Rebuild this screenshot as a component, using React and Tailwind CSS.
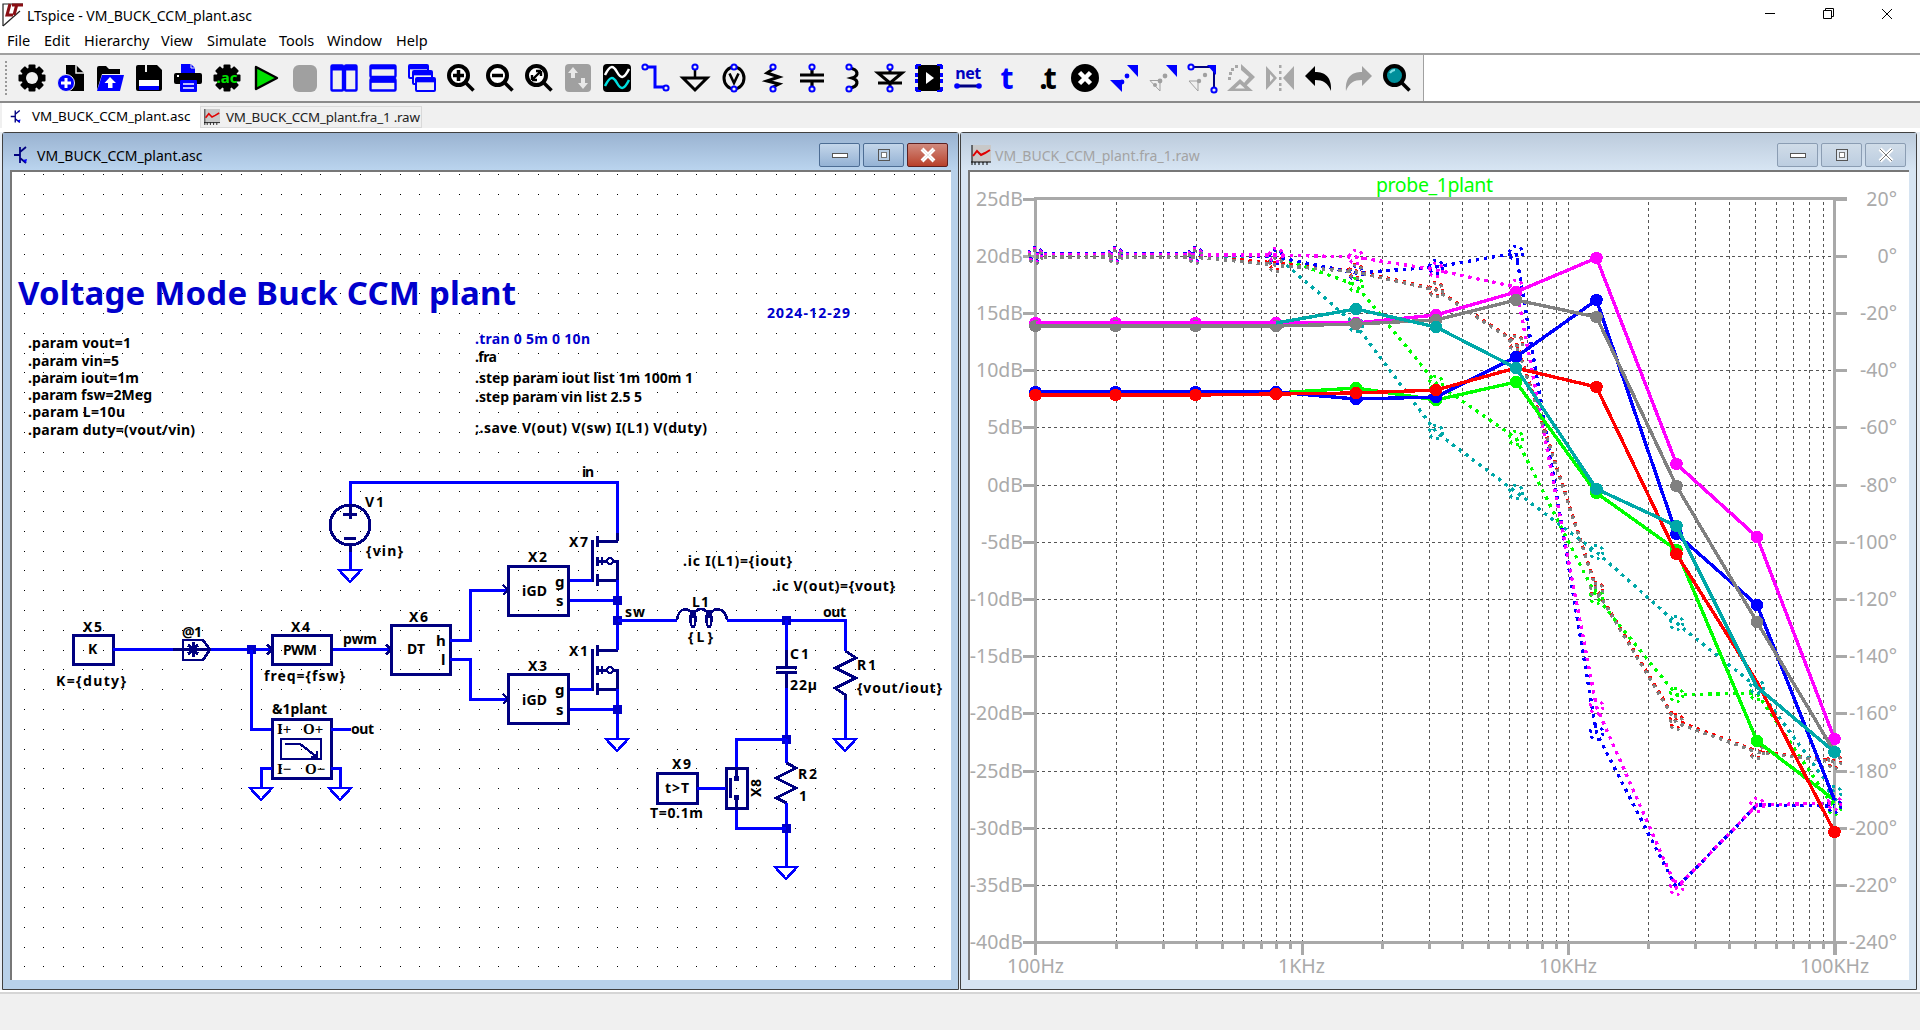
import React from "react";

const NAVY = "#000080";
const BLUE = "#0000ff";
const JUNC = "#0000c8";

/* ---------- toolbar icons (28x28) ---------- */
const Gear = ({ hole = "#f0f0f0", r = 6 }) => (
  <g>
    {[0, 45, 90, 135].map((a) => (
      <rect key={a} x="10.5" y="0.5" width="7" height="27" rx="1" transform={`rotate(${a} 14 14)`} fill="#000" />
    ))}
    <circle cx="14" cy="14" r="10.5" fill="#000" />
    {r > 0 && <circle cx="14" cy="14" r={r} fill={hole} />}
  </g>
);
const Pin = ({ x, y }) => <circle cx={x} cy={y} r="2.6" fill="#f0f0f0" stroke={BLUE} strokeWidth="2" />;
const Mag = ({ children, fill = "#fff" }) => (
  <g>
    <line x1="19" y1="19" x2="26.5" y2="26.5" stroke="#000" strokeWidth="3.5" />
    <circle cx="11.5" cy="11.5" r="9.5" fill={fill} stroke="#000" strokeWidth="4" />
    {children}
  </g>
);
const Win = ({ x, y, w, h, s = 2.4 }) => (
  <g>
    <rect x={x} y={y} width={w} height={h} fill="#f0f0f0" stroke={BLUE} strokeWidth={s} rx="1" />
    <rect x={x} y={y} width={w} height={Math.min(5, h / 3)} fill={BLUE} />
  </g>
);
const tx = "font-['Noto_Sans',sans-serif] font-bold";
const icons = [
  <Gear />,
  <g>
    <path d="M9 1H19L27 9V27H9Z" fill="#000" />
    <path d="M19 1V9H27" fill="none" stroke="#f0f0f0" strokeWidth="1.5" />
    <circle cx="9" cy="19" r="8.5" fill={BLUE} stroke="#f0f0f0" strokeWidth="1" />
    <path d="M9 14V24M4 19H14" stroke="#fff" strokeWidth="3" />
  </g>,
  <g>
    <path d="M1 26V4Q1 2 3 2H10L13 5H24V10H6L1 26Z" fill="#000" />
    <path d="M6 11H28L24 27H1Z" fill={BLUE} />
    <path d="M14 13L20 19H16.5V24H12V19H8.5Z" fill="#fff" />
  </g>,
  <g>
    <path d="M1 3Q1 1 3 1H22L27 6V25Q27 27 25 27H3Q1 27 1 25Z" fill="#000" />
    <rect x="10" y="1" width="2" height="7" fill="#f0f0f0" />
    <rect x="4" y="16" width="20" height="6" fill="#fff" />
    <rect x="4" y="22" width="20" height="4" fill={BLUE} />
  </g>,
  <g>
    <path d="M7 0H17L21 4V10H7Z" fill={BLUE} />
    <path d="M17 0V4H21" fill="none" stroke="#f0f0f0" />
    <rect x="0" y="9" width="28" height="11" rx="2" fill="#000" />
    <rect x="3" y="11" width="2" height="2" fill="#fff" />
    <rect x="6" y="16" width="17" height="12" rx="1" fill={BLUE} />
    <path d="M9 20H20M9 24H20" stroke="#fff" strokeWidth="1.5" />
  </g>,
  <g>
    <Gear r={0} />
    <text x="14" y="19" textAnchor="middle" fontSize="15" fill="#00e000" className={tx}>.ac</text>
  </g>,
  <path d="M4 3L25 14L4 25Z" fill="#00e000" stroke="#000" strokeWidth="2.4" strokeLinejoin="round" />,
  <rect x="2" y="1" width="24" height="27" rx="6" fill="#a0a0a0" />,
  <g><Win x={1.5} y={1.5} w={11.5} h={25} /><Win x={15} y={1.5} w={11.5} h={25} /></g>,
  <g><Win x={1.5} y={1.5} w={25} h={11.5} /><Win x={1.5} y={15} w={25} h={11.5} /></g>,
  <g><Win x={1} y={1} w={19} h={13} s={2} /><Win x={5} y={7} w={19} h={13} s={2} /><Win x={8} y={14} w={19} h={13} s={2} /></g>,
  <Mag><path d="M11.5 6V17M6 11.5H17" stroke="#000" strokeWidth="3.5" /></Mag>,
  <Mag><path d="M6 11.5H17" stroke="#000" strokeWidth="3.5" /></Mag>,
  <Mag><path d="M7 16L16 7M16 7H11M16 7V12M7 16H12M7 16V11" stroke="#000" strokeWidth="2.4" fill="none" /></Mag>,
  <g>
    <rect x="1" y="0" width="26" height="28" rx="4" fill="#a0a0a0" />
    <path d="M9 3L14 9H11V14H7V9H4Z" fill="#e8e8e8" />
    <path d="M19 25L24 19H21V14H17V19H14Z" fill="#e8e8e8" />
  </g>,
  <g>
    <rect x="0" y="0" width="28" height="28" rx="4" fill="#000" />
    <path d="M2 11C7 1 10 1 14 8S21 15 26 5" fill="none" stroke="#fff" strokeWidth="2.5" />
    <path d="M2 22C7 12 10 12 14 19S21 26 26 16" fill="none" stroke="#00e0e0" strokeWidth="2.5" />
  </g>,
  <g>
    <path d="M5 3H13V23H22" fill="none" stroke={BLUE} strokeWidth="3" />
    <Pin x={3} y={3} /><Pin x={24} y={24} />
  </g>,
  <g>
    <line x1="14" y1="4" x2="14" y2="14" stroke="#000" strokeWidth="2.5" />
    <path d="M2 14H26L14 26Z" fill="none" stroke="#000" strokeWidth="3" />
    <Pin x={14} y={3} />
  </g>,
  <g>
    <ellipse cx="14" cy="14" rx="10" ry="11" fill="none" stroke="#000" strokeWidth="3" />
    <path d="M9.5 9.5L14 19L18.5 9.5" fill="none" stroke="#000" strokeWidth="2.6" />
    <Pin x={14} y={3} /><Pin x={14} y={25} />
  </g>,
  <g>
    <path d="M14 5L8 9L20 13L8 17L20 20L14 23" fill="none" stroke="#000" strokeWidth="3" />
    <Pin x={14} y={3} /><Pin x={14} y={25} />
  </g>,
  <g>
    <path d="M14 5V11M14 17V23M2 11H26M2 17H26" stroke="#000" strokeWidth="3.2" />
    <Pin x={14} y={3} /><Pin x={14} y={25} />
  </g>,
  <g>
    <path d="M12 4C22 5 22 12 15 14C22 16 22 23 12 24" fill="none" stroke="#000" strokeWidth="3.2" />
    <Pin x={12} y={3} /><Pin x={12} y={25} />
  </g>,
  <g>
    <path d="M2 9H26L14 19Z" fill="none" stroke="#000" strokeWidth="3" />
    <path d="M2 19H26M14 5V9M14 19V23" stroke="#000" strokeWidth="3" />
    <Pin x={14} y={3} /><Pin x={14} y={25} />
  </g>,
  <g>
    <rect x="3" y="1" width="22" height="26" rx="2" fill="#000" />
    <path d="M11 8L19 14L11 20Z" fill="#fff" />
    {[3, 11, 17, 25].map((y) => (
      <g key={y}><rect x="0" y={y - 2} width="3" height="4" fill={BLUE} /><rect x="25" y={y - 2} width="3" height="4" fill={BLUE} /></g>
    ))}
    <path d="M1 1H6M22 1H27M1 27H6M22 27H27" stroke={BLUE} strokeWidth="2" />
  </g>,
  <g>
    <text x="14" y="15" textAnchor="middle" fontSize="16" fill="#0000c0" className={tx} style={{ letterSpacing: "-0.5px" }}>net</text>
    <path d="M3 22H25" stroke={NAVY} strokeWidth="3" />
    <circle cx="3" cy="22" r="2.8" fill={BLUE} /><circle cx="25" cy="22" r="2.8" fill={BLUE} />
  </g>,
  <text x="14" y="25" textAnchor="middle" fontSize="30" fill={BLUE} className={tx}>t</text>,
  <text x="14" y="25" textAnchor="middle" fontSize="30" fill="#000" className={tx} style={{ letterSpacing: "-4px" }}>.t</text>,
  <g>
    <circle cx="14" cy="14" r="14" fill="#000" />
    <path d="M8.5 8.5L19.5 19.5M19.5 8.5L8.5 19.5" stroke="#fff" strokeWidth="4.5" />
  </g>,
  <g>
    <path d="M28 1V13L17 1Z" fill={BLUE} /><path d="M0 16H12V28Z" fill={BLUE} />
    <circle cx="12" cy="18" r="2.4" fill={BLUE} /><circle cx="17" cy="12" r="2.4" fill={BLUE} />
  </g>,
  <g>
    <path d="M28 1V13L17 1Z" fill={BLUE} /><path d="M1 16.5H11V27Z" fill="none" stroke="#a0a0a0" />
    <circle cx="11" cy="17" r="2.4" fill="#a0a0a0" /><circle cx="16" cy="12" r="2.4" fill="#a0a0a0" /><circle cx="6" cy="21" r="2" fill="#a0a0a0" />
  </g>,
  <g>
    <path d="M5 3H26V25" fill="none" stroke={NAVY} strokeWidth="2" />
    <path d="M28 1V11L19 1Z" fill={BLUE} /><path d="M1 17H10V27Z" fill="none" stroke="#a0a0a0" />
    <circle cx="11" cy="17" r="2.2" fill="#a0a0a0" /><circle cx="17" cy="11" r="2.2" fill="#a0a0a0" />
    <Pin x={3} y={3} /><Pin x={26} y={26} />
  </g>,
  <g fill="#a8a8a8">
    <path d="M14 0L28 13L17 24V19L22 13L14 6Z" />
    <path d="M13 15L26 27H0ZM13 20L8 24.5H18Z" fillRule="evenodd" />
    {[[2, 8], [4, 4], [8, 1], [1, 13]].map(([x, y]) => <rect key={y} x={x} y={y} width="3" height="3" />)}
  </g>,
  <g fill="#a8a8a8">
    <path d="M0 2L11 14L0 26ZM4 10V18L7.5 14Z" fillRule="evenodd" />
    <path d="M28 2L17 14L28 26Z" />
    {[1, 7, 13, 19, 24].map((y) => <rect key={y} x="13" y={y} width="2.5" height="3" />)}
  </g>,
  <path d="M10 2V8C20 8 27 13 26 27C23 19 18 16 10 16V22L0 12Z" fill="#000" />,
  <path d="M18 2V8C8 8 1 13 2 27C5 19 10 16 18 16V22L28 12Z" fill="#a0a0a0" />,
  <g>
    <line x1="19" y1="19" x2="26.5" y2="26.5" stroke="#000" strokeWidth="3.5" />
    <circle cx="11.5" cy="11.5" r="9.5" fill="#008f9a" stroke="#000" strokeWidth="4" />
    <path d="M7 9Q9 6 12 6" stroke="#7fe0e6" strokeWidth="2" fill="none" />
  </g>,
];

/* ---------- schematic ---------- */
const S = ({ d }) => <path d={d} fill="none" stroke={NAVY} strokeWidth="3" />;
const W = ({ d }) => <path d={d} fill="none" stroke={BLUE} strokeWidth="3" />;
const J = ({ x, y }) => <rect x={x - 4.5} y={y - 4.5} width="9" height="9" fill={JUNC} />;
const Gnd = ({ x, y }) => <path d={`M${x - 11} ${y}H${x + 11}L${x} ${y + 12}Z`} fill="none" stroke={BLUE} strokeWidth="2.6" />;
const Arrow = ({ x, y }) => <path d={`M${x - 5} ${y - 5}L${x} ${y}L${x - 5} ${y + 5}`} fill="none" stroke={NAVY} strokeWidth="2.4" />;
const T = ({ x, y, len, size = 14, fill = "#000", anchor, serif, children }) => (
  <text
    x={x}
    y={y}
    fill={fill}
    fontSize={size}
    textLength={len}
    textAnchor={anchor}
    lengthAdjust="spacing"
    className={serif ? "font-['Liberation_Serif',serif] font-bold" : "font-['Noto_Sans',sans-serif] font-bold"}
  >
    {children}
  </text>
);
const Mos = ({ y }) => (
  <g>
    <S d={`M592.5 ${y - 1}V${y + 41}`} />
    <S d={`M597.5 ${y - 5}V${y + 6}M597.5 ${y + 16}V${y + 25}M597.5 ${y + 33}V${y + 45}`} />
    <S d={`M597.5 ${y}H617.5M597.5 ${y + 20}H617.5V${y + 39}H597.5`} />
    <circle cx="610" cy={y + 20} r="3" fill="#fff" stroke={NAVY} strokeWidth="2.4" />
    <path d={`M602 ${y + 16}V${y + 24}`} stroke={NAVY} strokeWidth="2.4" />
  </g>
);
const Block = ({ x, y, w, h }) => <rect x={x} y={y} width={w} height={h} fill="none" stroke={NAVY} strokeWidth="3" />;

const dots = [];
for (let r = 0; r < 41; r++) for (let c = 0; c < 47; c++) {
  dots.push(`M${Math.round(23.5 + c * 19.79)} ${Math.round(174.4 + r * 19.8)}h1v1h-1z`);
}

function Schematic() {
  return (
    <svg viewBox="12 172 939 808" className="block h-full w-full" shapeRendering="crispEdges">
      <path d={dots.join("")} fill="#000" />
      <T x={18} y={305} size={33} fill="#0000cc" len={498}>Voltage Mode Buck CCM plant</T>
      <T x={767} y={318} fill="#0000cc" len={83}>2024-12-29</T>
      <T x={28} y={348} len={103}>.param vout=1</T>
      <T x={28} y={366} len={91}>.param vin=5</T>
      <T x={28} y={383} len={111}>.param iout=1m</T>
      <T x={28} y={400} len={124}>.param fsw=2Meg</T>
      <T x={28} y={417} len={97}>.param L=10u</T>
      <T x={28} y={435} len={167}>.param duty=(vout/vin)</T>
      <T x={475} y={344} fill="#0000cc" len={115}>.tran 0 5m 0 10n</T>
      <T x={475} y={362} len={22}>.fra</T>
      <T x={475} y={383} len={218}>.step param iout list 1m 100m 1</T>
      <T x={475} y={402} len={167}>.step param vin list 2.5 5</T>
      <T x={475} y={433} len={232}>;.save V(out) V(sw) I(L1) V(duty)</T>

      {/* V1 */}
      <W d="M350 505V482H617.5V533" />
      <S d="M350 505V519" />
      <circle cx="350" cy="525" r="20" fill="none" stroke={NAVY} strokeWidth="3" />
      <S d="M343 514H357M344 538H356" />
      <S d="M350 545V552" />
      <W d="M350 552V570" />
      <Gnd x={350} y={570} />
      <T x={365} y={507} len={19}>V1</T>
      <T x={366} y={556} len={37}>{"{vin}"}</T>
      <T x={582} y={477} len={12}>in</T>
      <S d="M617.5 533V541" />

      {/* MOSFETs */}
      <Mos y={541} />
      <Mos y={650} />
      <T x={569} y={547} len={19}>X7</T>
      <T x={569} y={656} len={19}>X1</T>
      <W d="M617.5 580V650" />
      <W d="M617.5 689V739" />
      <Gnd x={617} y={739} />
      <W d="M568 580H592M568 600.5H617.5M568 689H592M568 709.5H617.5" />
      <J x={617.5} y={600.5} />
      <J x={617.5} y={620} />
      <J x={617.5} y={709.5} />

      {/* X2 X3 */}
      <Block x={508} y={566} w={60} h={49} />
      <Block x={508} y={674} w={60} h={49} />
      <T x={528} y={562} len={19}>X2</T>
      <T x={522} y={596} len={25}>iGD</T>
      <T x={555} y={587} size={15}>g</T>
      <T x={556} y={606} size={15}>s</T>
      <T x={528} y={671} len={19}>X3</T>
      <T x={522} y={705} len={25}>iGD</T>
      <T x={555} y={695} size={15}>g</T>
      <T x={556} y={715} size={15}>s</T>

      {/* X6 */}
      <Block x={391} y={625} w={59} h={49} />
      <T x={409} y={622} len={19}>X6</T>
      <T x={407} y={654} len={18}>DT</T>
      <T x={436} y={646} size={15}>h</T>
      <T x={441} y={665} size={15}>l</T>
      <W d="M450 640H470V590H508M450 659H470V699H508" />
      <Arrow x={508} y={590} />
      <Arrow x={508} y={699} />
      <W d="M331 649.5H391" />
      <Arrow x={391} y={649.5} />
      <T x={343} y={644} len={34}>pwm</T>

      {/* X5 probe X4 */}
      <Block x={73} y={635} w={40} h={29} />
      <T x={88} y={654}>K</T>
      <T x={83} y={632} len={19}>X5</T>
      <T x={56} y={686} len={70}>{"K={duty}"}</T>
      <W d="M113 649.5H173" />
      <S d="M173 649.5H211" />
      <path d="M183 640H203L210 649.5L203 660H183Z" fill="none" stroke={NAVY} strokeWidth="2.6" />
      <path d="M188 645L198 654M198 645L188 654M193 642V657M186 649.5H203" stroke={NAVY} strokeWidth="3" />
      <T x={182} y={637} len={20}>@1</T>
      <W d="M211 649.5H272" />
      <Arrow x={272} y={649.5} />
      <J x={251} y={649.5} />
      <Block x={272} y={635} w={59} h={29} />
      <T x={283} y={655} len={34}>PWM</T>
      <T x={291} y={632} len={19}>X4</T>
      <T x={264} y={681} len={81}>{"freq={fsw}"}</T>

      {/* plant */}
      <W d="M251 649.5V729H272" />
      <Block x={272} y={719} w={59} h={59} />
      <rect x="281" y="739" width="40" height="20" fill="none" stroke={NAVY} strokeWidth="2.6" />
      <path d="M285 744H300L317 757M317 751V757H311" fill="none" stroke={NAVY} strokeWidth="2.4" />
      <T x={272} y={714} len={55}>&amp;1plant</T>
      <T x={277} y={734} serif size={15}>I+</T>
      <T x={303} y={734} serif size={15}>O+</T>
      <T x={277} y={774} serif size={15}>I−</T>
      <T x={305} y={774} serif size={15}>O−</T>
      <W d="M331 729H351" />
      <T x={351} y={734} len={23}>out</T>
      <W d="M272 768H261V788M331 768H340V788" />
      <Gnd x={261} y={788} />
      <Gnd x={340} y={788} />

      {/* output */}
      <W d="M617.5 620H677" />
      <T x={625} y={617} len={20}>sw</T>
      <path d="M677 620C678 606 692 606 693 618C694 606 708 606 709 618C710 606 726 606 727 620" fill="none" stroke={NAVY} strokeWidth="2.6" />
      <ellipse cx="693" cy="619" rx="2.5" ry="8" fill="none" stroke={NAVY} strokeWidth="2.4" />
      <ellipse cx="709" cy="619" rx="2.5" ry="8" fill="none" stroke={NAVY} strokeWidth="2.4" />
      <T x={692} y={607} len={17}>L1</T>
      <T x={688} y={642} len={25}>{"{L}"}</T>
      <W d="M727 620H845.5V651" />
      <T x={823} y={617} len={23}>out</T>
      <J x={786.5} y={620.5} />
      <T x={683} y={566} len={109}>.ic I(L1)={"{iout}"}</T>
      <T x={772} y={591} len={123}>.ic V(out)={"{vout}"}</T>

      {/* C1 */}
      <W d="M786.5 620V650" />
      <S d="M786.5 650V667M776 667H797M776 672.5H797M786.5 672.5V688" />
      <W d="M786.5 688V739" />
      <T x={790} y={659} len={19}>C1</T>
      <T x={790} y={690} len={27}>22µ</T>

      {/* R1 */}
      <S d="M845.5 651L856 658L835 668L856 678L835 688L845.5 695V700" />
      <W d="M845.5 700V739" />
      <Gnd x={845} y={739} />
      <T x={857} y={670} len={19}>R1</T>
      <T x={857} y={693} len={85}>{"{vout/iout}"}</T>

      {/* R2 switch */}
      <J x={786.5} y={739} />
      <W d="M786.5 739V763" />
      <S d="M786.5 763L796 768L776 778L796 788L776 798L786.5 803" />
      <W d="M786.5 803V867" />
      <Gnd x={786} y={867} />
      <J x={786.5} y={828} />
      <T x={798} y={779} len={19}>R2</T>
      <T x={799} y={801}>1</T>
      <W d="M786 739H736.5V768M736.5 808V828H786" />
      <rect x="726" y="768" width="21" height="40" fill="none" stroke={NAVY} strokeWidth="3" />
      <S d="M736.5 768V778M736.5 798V808M730 778V798" />
      <rect x="734" y="776" width="5" height="5" fill={NAVY} />
      <rect x="734" y="795" width="5" height="5" fill={NAVY} />
      <g transform="translate(761 797) rotate(-90)"><T x={0} y={0} len={18}>X8</T></g>
      <Block x={657} y={773} w={40} h={30} />
      <T x={665} y={793} len={24}>t&gt;T</T>
      <W d="M697 788H726" />
      <T x={672} y={769} len={19}>X9</T>
      <T x={650} y={818} len={53}>T=0.1m</T>
    </svg>
  );
}

/* ---------- Bode plot ---------- */
const XS = [1035.5, 1115.5, 1195.5, 1276, 1356, 1436, 1516, 1596.5, 1676.5, 1757, 1834.5];
const solid = [
  ["#00a8a8", [323, 323, 323, 323, 309, 327, 368, 489, 526, 687, 752], [0, 1, 2, 3, 9], 3],
  ["#00ff00", [393, 393, 393, 393, 388, 400, 382, 493, 550, 741, 800], [10], 0],
  [BLUE, [392, 392, 392, 392, 399, 397, 357, 300, 534, 605, 800], [10], 0],
  ["#ff0000", [395, 395, 395, 394, 393, 390, 368, 387, 554, 682, 832], [9], 0],
  ["#ff00ff", [323, 323, 323, 323, 323, 315, 292, 258, 464, 537, 739], [], 0],
  ["#808080", [326, 326, 326, 326, 324, 320, 300, 317, 486, 622, 752], [], 0],
];
const tealTop = solid[0];
const dotted = [
  ["#ff0000", [256, 256, 256, 263, 271, 289, 342, 589, 721, 751, 761]],
  ["#00ff00", [256, 256, 256, 256, 285, 383, 438, 597, 695, 693, 808]],
  ["#00a8a8", [256, 256, 256, 256, 325, 432, 492, 552, 623, 687, 793]],
  [BLUE, [254, 254, 254, 257, 273, 267, 253, 733, 888, 805, 806]],
  ["#ff00ff", [255, 255, 255, 255, 257, 270, 287, 707, 888, 805, 803]],
  ["#808080", [257, 257, 257, 265, 272, 290, 343, 590, 723, 752, 762]],
];
const dbLabels = Array.from({ length: 14 }, (_, i) => 25 - 5 * i);
const degLabels = Array.from({ length: 14 }, (_, i) => 20 - 20 * i);
const Y0 = 198.5, YS = 57.2;
const yAt = (i) => Math.round(Y0 + YS * i);
const X0 = 1035.5, DEC = 266.4;
const vGrid = [];
for (let d = 0; d < 3; d++) for (let n = 2; n <= 10; n++) vGrid.push({ x: Math.round(X0 + DEC * (d + Math.log10(n))), major: n === 10 });
const AXIS = "#a9a9a9";
const lab = "font-['Noto_Sans',sans-serif]";

function Plot() {
  return (
    <svg viewBox="970 172 939 808" className="block h-full w-full" shapeRendering="crispEdges">
      <text x="1376" y="192" fontSize="19.5" fill="#00ff00" textLength="117" className={lab}>probe_1plant</text>
      {/* grid */}
      {dbLabels.slice(1, -1).map((_, i) => (
        <path key={i} d={`M1036 ${yAt(i + 1)}H1834`} stroke="#555" strokeDasharray="3 3" />
      ))}
      {vGrid.filter((g) => g.x < 1833).map((g) => (
        <path key={g.x} d={`M${g.x} 202V942`} stroke="#555" strokeDasharray="3 3" />
      ))}
      {/* frame */}
      <path d="M1035.5 198.5H1847M1035.5 942.5H1847" stroke={AXIS} strokeWidth="3" />
      <path d="M1035.5 197V955M1834.5 197V955" stroke={AXIS} strokeWidth="3" />
      {dbLabels.map((_, i) => (
        <path key={i} d={`M1023 ${yAt(i)}H1036M1835 ${yAt(i)}H1847`} stroke={AXIS} strokeWidth="3" />
      ))}
      {vGrid.map((g) => (
        <path key={g.x} d={`M${g.x} 942V${g.major ? 955 : 949}`} stroke={AXIS} strokeWidth="3" />
      ))}
      {/* labels */}
      {dbLabels.map((v, i) => (
        <text key={v} x="1023" y={yAt(i) + 7} fontSize="19.5" fill="#aaa" textAnchor="end" className={lab}>{v}dB</text>
      ))}
      {degLabels.map((v, i) => (
        <text key={v} x="1897" y={yAt(i) + 7} fontSize="19.5" fill="#aaa" textAnchor="end" className={lab}>{v}°</text>
      ))}
      {[["100Hz", 1035.5], ["1KHz", 1301.5], ["10KHz", 1568], ["100KHz", 1834.5]].map(([t, x]) => (
        <text key={t} x={x} y="973" fontSize="19.5" fill="#aaa" textAnchor="middle" className={lab}>{t}</text>
      ))}
      {/* phase */}
      {dotted.map(([c, ys]) => (
        <g key={c} fill="none" stroke={c} strokeWidth="3.4">
          <polyline points={ys.map((y, i) => `${XS[i]},${y}`).join(" ")} strokeDasharray="3.4 4.8" />
          {ys.map((y, i) => <circle key={i} cx={XS[i]} cy={y} r="6.5" strokeWidth="3" strokeDasharray="3 3.8" />)}
        </g>
      ))}
      {/* magnitude */}
      {solid.map(([c, ys, skip], k) => (
        <g key={c}>
          <polyline points={ys.map((y, i) => `${XS[i]},${y}`).join(" ")} fill="none" stroke={c} strokeWidth="3.4" />
          {ys.map((y, i) => (skip.includes(i) ? null : <circle key={i} cx={XS[i]} cy={y} r="6.3" fill={c} />))}
        </g>
      ))}
      {/* teal stays over the others past the flat part of the curve */}
      <polyline points={tealTop[1].slice(3).map((y, i) => `${XS[i + 3]},${y}`).join(" ")} fill="none" stroke={tealTop[0]} strokeWidth="3.4" />
      {tealTop[1].map((y, i) => (tealTop[2].includes(i) ? null : <circle key={i} cx={XS[i]} cy={y} r="6.3" fill={tealTop[0]} />))}
      {/* gray and magenta sit on top of teal in the flat part */}
      <polyline points="1035.5,323 1276,323" fill="none" stroke="#ff00ff" strokeWidth="3.4" />
      <polyline points="1035.5,326 1276,326" fill="none" stroke="#808080" strokeWidth="3.4" />
    </svg>
  );
}

/* ---------- window chrome ---------- */
const CtlBtn = ({ kind, active }) => {
  const base = active
    ? kind === "close"
      ? "bg-gradient-to-b from-[#d08a7e] to-[#b8402a] border-[#5e2020]"
      : "bg-gradient-to-b from-[#c4d6ea] to-[#94b2d4] border-[#4d6d94]"
    : "bg-gradient-to-b from-[#d0dce8] to-[#bccde0] border-[#8b9db3]";
  return (
    <div className={`flex h-[24px] w-[41px] items-center justify-center rounded-[2px] border ${base}`}>
      {kind === "min" && <div className="h-[5px] w-[16px] border border-[#555] bg-white" />}
      {kind === "max" && <div className={`flex h-[12px] w-[12px] items-center justify-center border border-[#555] ${active ? "bg-[#b8cde4]" : "bg-[#dfe7f0]"}`}><div className="h-[6px] w-[6px] border border-[#777] bg-white" /></div>}
      {kind === "close" && (
        <svg width="18" height="16" viewBox="0 0 18 16"><path d="M3 2L15 14M15 2L3 14" stroke="#fff" strokeWidth="4" /><path d="M3 2L15 14M15 2L3 14" stroke={active ? "#e8e8e8" : "#777"} strokeWidth="1" /></svg>
      )}
    </div>
  );
};

const SchIcon = ({ size = 20 }) => (
  <svg width={size} height={size} viewBox="0 0 20 20">
    <path d="M7 2V18M1 10H7M7 7L13 2M7 13L13 18" fill="none" stroke="#000080" strokeWidth="1.8" />
    <path d="M10 15L13 18L14 14Z" fill={BLUE} />
  </svg>
);
const PlotIcon = ({ size = 20 }) => (
  <svg width={size} height={size} viewBox="0 0 20 20">
    <rect x="1" y="0" width="19" height="17" fill="#c8c8c8" />
    <path d="M1 0V20M0 17H20M4 17V20M8 17V20M12 17V20M16 17V20" stroke="#000" />
    <path d="M2 11L6 6L10 10L14 8L19 5" fill="none" stroke="#e00000" strokeWidth="2" />
  </svg>
);

const Window = ({ active, title, icon, children, className }) => (
  <div
    className={`flex flex-col border border-[#404040] rounded-t-[3px] ${className} ${active ? "bg-[#b8d1ea]" : "bg-[#d6e4f2]"}`}
  >
    <div
      className={`flex h-[37px] items-center pt-[7px] ${active ? "bg-gradient-to-b from-[#9ab3d1] to-[#bad4ee]" : "bg-gradient-to-b from-[#bccbdc] to-[#d7e5f3]"}`}
    >
      <div className="ml-[10px] mr-[4px]">{icon}</div>
      <span className={`font-['Noto_Sans',sans-serif] text-[14px] ${active ? "text-black" : "text-[#a3a3a3]"}`}>{title}</span>
      <div className="ml-auto mr-[10px] flex gap-[3px]">
        <CtlBtn kind="min" active={active} />
        <CtlBtn kind="max" active={active} />
        <CtlBtn kind="close" active={active} />
      </div>
    </div>
    <div className="mx-[7px] mb-[9px] min-h-0 flex-1 border-l-2 border-t-2 border-l-[#777] border-t-[#777] bg-white">
      {children}
    </div>
  </div>
);

const MENU = [["File", 37], ["Edit", 40], ["Hierarchy", 77], ["View", 46], ["Simulate", 72], ["Tools", 48], ["Window", 69], ["Help", 40]];

export default function App() {
  return (
    <div className="flex h-[1030px] w-[1920px] flex-col overflow-hidden bg-white font-['Noto_Sans',sans-serif] text-black">
      {/* title bar */}
      <div className="flex h-[27px] items-center bg-white">
        <svg width="22" height="24" viewBox="0 0 22 24" className="ml-[2px] mt-[2px]">
          <path d="M1 23V1L21 1" fill="none" stroke="#222" strokeWidth="1.2" />
          <path d="M1 23L18 8" fill="none" stroke="#222" strokeWidth="1.2" />
          <path d="M8 1L5 12H11M15 1L12 12M10 2H21" fill="none" stroke="#8a0f14" strokeWidth="3" />
        </svg>
        <span className="ml-[3px] pt-[4px] text-[14px]">LTspice - VM_BUCK_CCM_plant.asc</span>
        <div className="ml-auto flex h-full items-center pr-[3px]">
          <div className="flex w-[58px] justify-center"><div className="h-px w-[10px] bg-black" /></div>
          <div className="flex w-[58px] justify-center">
            <svg width="11" height="11" viewBox="0 0 11 11"><path d="M2.5 2.5V.5H10.5V8.5H8.5M.5 2.5H8.5V10.5H.5Z" fill="none" stroke="#000" /></svg>
          </div>
          <div className="flex w-[60px] justify-center">
            <svg width="12" height="12" viewBox="0 0 12 12"><path d="M1 1L11 11M11 1L1 11" stroke="#000" /></svg>
          </div>
        </div>
      </div>
      {/* menu */}
      <div className="flex h-[26px] items-center bg-white pl-[7px] pt-[2px] text-[14.5px]">
        {MENU.map(([m, w]) => (
          <span key={m} className="shrink-0" style={{ width: w }}>{m}</span>
        ))}
      </div>
      {/* toolbar */}
      <div className="flex h-[50px] items-stretch border-t-2 border-b-2 border-t-[#a0a0a0] border-b-[#8a8a8a] bg-white">
        <div className="flex w-[1424px] items-center border-r border-r-[#a0a0a0] bg-[#f0f0f0]">
          <div className="ml-[5px] mr-[5px] h-[34px] w-[2px] border-l-2 border-dotted border-l-[#999]" />
          {icons.map((ic, i) => (
            <div key={i} className="flex w-[39.03px] shrink-0 items-center justify-center">
              <svg width="36" height="44" viewBox="-4 -8 36 44">{ic}</svg>
            </div>
          ))}
        </div>
      </div>
      {/* tabs */}
      <div className="flex h-[29px] items-end border-b-4 border-b-white bg-[#f0f0f0] pl-[2px]">
        <div className="flex h-[25px] w-[198px] items-center bg-white pt-[1px] text-[13.4px]">
          <div className="ml-[8px] mr-[7px]"><SchIcon size={15} /></div>
          <span>VM_BUCK_CCM_plant.asc</span>
        </div>
        <div className="flex h-[22px] w-[222px] items-center border border-[#d9d9d9] bg-[#f0f0f0] text-[13.4px] text-[#222]">
          <div className="ml-[3px] mr-[6px]"><PlotIcon size={16} /></div>
          <span className="tracking-[-0.2px]">VM_BUCK_CCM_plant.fra_1 .raw</span>
        </div>
      </div>
      {/* MDI */}
      <div className="flex min-h-0 flex-1 gap-[1px] bg-[#e8eef5] pl-[2px] pr-[3px]">
        <Window active className="w-[957px]" title="VM_BUCK_CCM_plant.asc" icon={<SchIcon />}>
          <Schematic />
        </Window>
        <Window className="w-[957px]" title="VM_BUCK_CCM_plant.fra_1.raw" icon={<PlotIcon />}>
          <Plot />
        </Window>
      </div>
      {/* status */}
      <div className="mt-[2px] h-[38px] border-t-2 border-t-[#d5d5d5] bg-[#f0f0f0]" />
    </div>
  );
}
